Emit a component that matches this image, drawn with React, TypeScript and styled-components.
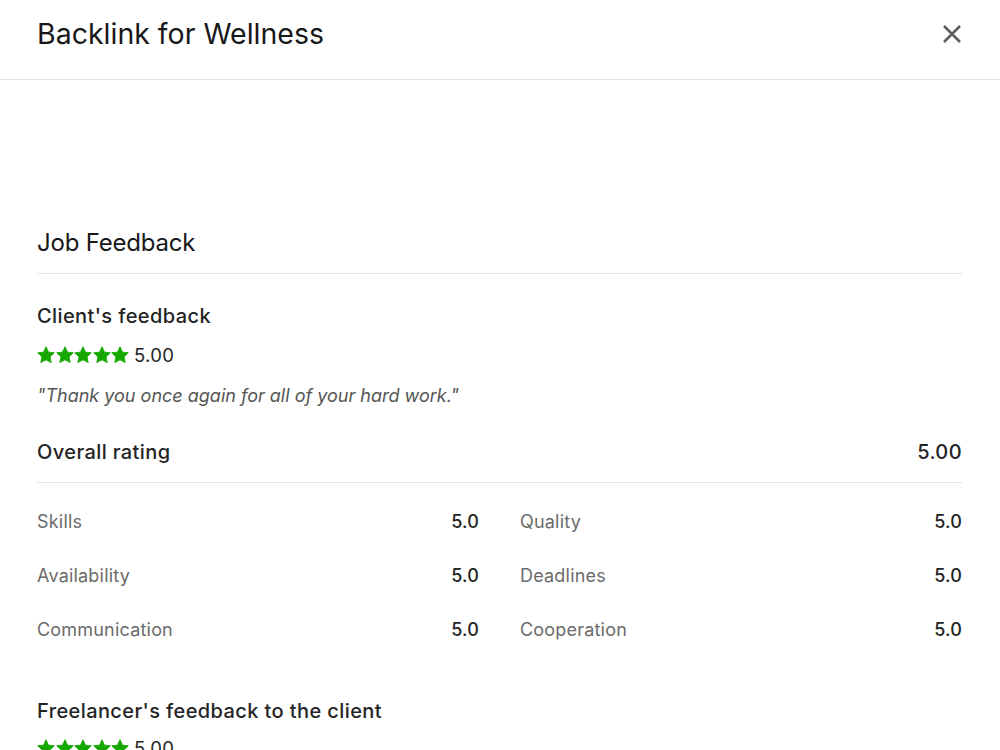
import React from "react";
import styled, { createGlobalStyle } from "styled-components";

const Global = createGlobalStyle`
  html, body { margin: 0; padding: 0; background: #fff; }
  body { font-family: Inter, "Liberation Sans", Arial, sans-serif; color: #181818; }
  * { box-sizing: border-box; }
`;

const Page = styled.div`
  width: 1000px;
  height: 750px;
  overflow: hidden;
  background: #fff;
`;

const Header = styled.header`
  height: 80px;
  border-bottom: 1px solid #e4e4e4;
  display: flex;
  align-items: center;
  justify-content: space-between;
  padding: 0 38px 12px 37px;
`;

const Title = styled.h1`
  margin: 0;
  font-size: 28.5px;
  font-weight: 400;
  color: #181818;
  letter-spacing: 0;
`;

const CloseButton = styled.button`
  border: 0;
  background: none;
  padding: 0;
  width: 20px;
  height: 20px;
  color: #5e5e5e;
  display: flex;
  align-items: center;
  justify-content: center;
  cursor: pointer;
`;

const Body = styled.main`
  padding: 147px 38px 0 37px;
`;

const SectionTitle = styled.h2`
  margin: 0;
  font-size: 24px;
  font-weight: 400;
  line-height: 32px;
  letter-spacing: -0.2px;
  padding-bottom: 14px;
  border-bottom: 1px solid #e4e4e4;
`;

const SubTitle = styled.h3<{ $top: number }>`
  margin: ${(p) => p.$top}px 0 0 0;
  font-size: 20px;
  font-weight: 500;
  letter-spacing: 0.4px;
  color: #242424;
  line-height: 24px;
`;

const RatingRow = styled.div<{ $top: number }>`
  display: flex;
  align-items: center;
  gap: 5px;
  margin-top: ${(p) => p.$top}px;
  font-size: 18.5px;
  letter-spacing: 0.3px;
  line-height: 24px;
  color: #242424;
`;

const Stars = styled.div`
  display: flex;
  gap: 0.5px;
`;

const Quote = styled.p`
  margin: 17px 0 0 0;
  font-style: italic;
  font-size: 18px;
  line-height: 24px;
  color: #555;
`;

const OverallRow = styled.div`
  display: flex;
  justify-content: space-between;
  align-items: center;
  margin-top: 32px;
  padding-bottom: 18px;
  border-bottom: 1px solid #e4e4e4;
  font-size: 20px;
  font-weight: 500;
  letter-spacing: 0.4px;
  color: #242424;
  line-height: 24px;
`;

const Grid = styled.div`
  display: grid;
  grid-template-columns: 1fr 1fr;
  column-gap: 41px;
  row-gap: 30px;
  margin-top: 27px;
`;

const Metric = styled.div`
  display: flex;
  justify-content: space-between;
  align-items: center;
  line-height: 24px;
  font-size: 18px;
  letter-spacing: 0.2px;
`;

const Label = styled.span`
  color: #6b6b6b;
`;

const Value = styled.span`
  color: #242424;
  font-weight: 500;
`;

const Star = () => (
  <svg width="18" height="18" viewBox="0 0 24 24" aria-hidden="true">
    <path
      fill="#14a800"
      d="M12 1l3.3 7.2 7.7.9-5.7 5.3 1.6 7.7L12 18.3l-6.9 3.8 1.6-7.7L1 9.1l7.7-.9z"
      stroke="#14a800"
      strokeWidth="1.2"
      strokeLinejoin="round"
    />
  </svg>
);

const StarRating = ({ value, top }: { value: string; top: number }) => (
  <RatingRow $top={top}>
    <Stars>
      {[0, 1, 2, 3, 4].map((i) => (
        <Star key={i} />
      ))}
    </Stars>
    <span>{value}</span>
  </RatingRow>
);

const metrics = [
  ["Skills", "5.0"],
  ["Quality", "5.0"],
  ["Availability", "5.0"],
  ["Deadlines", "5.0"],
  ["Communication", "5.0"],
  ["Cooperation", "5.0"],
];

export default function App() {
  return (
    <Page>
      <Global />
      <Header>
        <Title>Backlink for Wellness</Title>
        <CloseButton aria-label="Close">
          <svg width="20" height="20" viewBox="0 0 20 20">
            <path
              d="M2 2l16 16M18 2L2 18"
              stroke="currentColor"
              strokeWidth="2.5"
            />
          </svg>
        </CloseButton>
      </Header>
      <Body>
        <SectionTitle>Job Feedback</SectionTitle>
        <SubTitle $top={30}>Client's feedback</SubTitle>
        <StarRating value="5.00" top={15} />
        <Quote>"Thank you once again for all of your hard work."</Quote>
        <OverallRow>
          <span>Overall rating</span>
          <span>5.00</span>
        </OverallRow>
        <Grid>
          {metrics.map(([l, v]) => (
            <Metric key={l}>
              <Label>{l}</Label>
              <Value>{v}</Value>
            </Metric>
          ))}
        </Grid>
        <SubTitle $top={57}>Freelancer's feedback to the client</SubTitle>
        <StarRating value="5.00" top={13} />
      </Body>
    </Page>
  );
}
